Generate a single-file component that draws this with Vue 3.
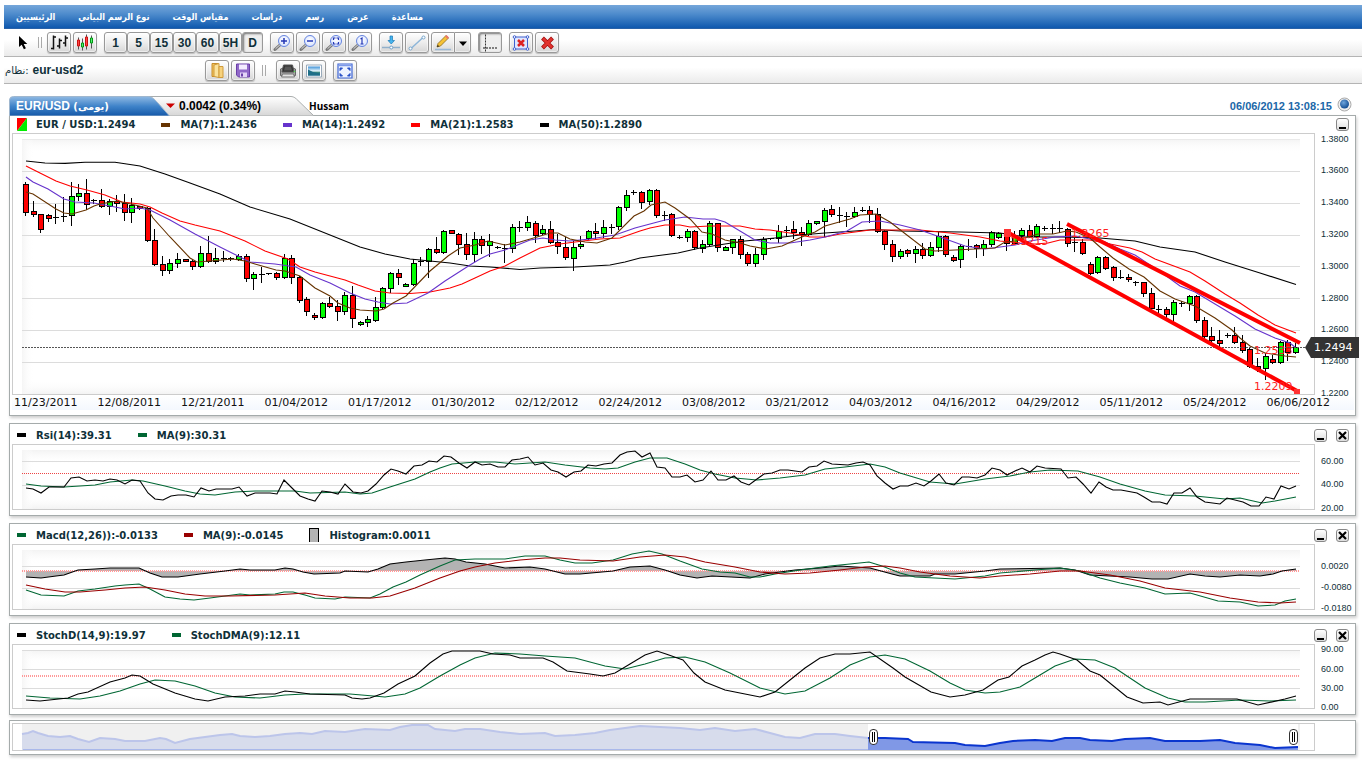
<script setup>
const menu = ['الرئيسيين', 'نوع الرسم البياني', 'مقياس الوقت', 'دراسات', 'رسم', 'عرض', 'مساعدة']
const periods = ['1', '5', '15', '30', '60', '5H', 'D']

// Candles: high, body top, body bottom, low, kind (r = down, g = up, k = doji)
const candleData = `182 184 212 215 r|201 211 214 216 r|214 214 229 232 r|214 215 218 221 r|204 217 217 223 k|197 216 216 221 k|182 196 215 225 g|184 193 196 200 g|179 193 204 209 r|199 200 200 203 k|189 200 206 207 r|199 201 206 214 g|195 201 203 211 r|194 203 212 220 r|198 205 212 222 g|206 206 208 209 r|207 208 240 241 r|229 240 264 265 r|256 264 270 275 r|259 263 270 273 g|253 259 263 267 g|259 259 261 261 r|260 261 266 269 r|246 253 266 267 g|236 253 261 262 r|248 258 261 263 g|251 258 258 261 k|257 258 258 260 k|254 256 259 260 g|254 256 278 281 r|272 274 278 289 g|267 274 274 282 k|273 273 273 274 k|272 273 277 279 r|254 258 277 278 g|255 258 277 283 r|276 277 300 302 r|297 299 311 315 r|313 315 317 319 r|302 303 317 318 g|297 303 306 307 r|300 306 311 320 r|292 295 311 314 g|286 295 318 327 r|321 322 324 325 g|316 319 322 326 g|297 307 320 321 g|287 288 307 308 g|272 273 288 292 g|269 273 277 284 r|283 284 286 286 g|259 263 284 285 g|257 261 261 265 k|248 249 261 277 g|237 249 252 253 r|230 231 252 253 g|230 230 233 233 r|233 234 244 254 r|233 244 254 259 r|232 239 254 261 g|236 239 245 253 r|234 241 245 256 g|246 247 247 248 k|244 248 248 262 k|224 227 248 252 g|221 227 227 231 k|216 222 227 230 g|221 223 235 242 r|225 229 233 234 g|221 229 242 243 r|234 242 246 253 r|237 247 257 259 r|241 247 258 270 g|236 244 246 248 g|230 231 238 239 g|223 231 233 238 r|220 227 233 237 g|224 227 227 233 k|206 207 226 229 g|190 195 207 210 g|190 192 192 194 k|191 192 202 208 r|189 190 201 204 g|189 190 215 217 r|211 215 215 220 k|213 214 235 236 r|235 237 237 238 k|229 231 237 241 g|230 231 247 249 r|240 244 248 252 g|221 223 244 245 g|223 223 247 251 r|246 247 250 250 g|239 239 247 253 g|236 239 254 258 r|252 254 263 265 r|248 254 263 266 g|237 239 254 259 g|238 238 238 239 k|225 231 238 242 g|226 230 230 236 k|221 229 232 238 r|227 232 234 245 r|220 223 234 235 g|221 221 223 224 g|208 210 221 236 g|205 209 214 216 r|207 215 215 222 k|212 216 216 226 k|207 212 216 217 g|207 210 210 211 k|206 210 214 222 r|208 214 231 232 r|230 231 244 249 r|240 244 256 261 r|249 251 256 258 g|249 250 253 256 r|246 249 253 262 g|243 249 255 258 r|242 247 255 256 g|232 236 247 251 g|235 236 254 256 r|255 257 260 261 r|244 246 259 267 g|239 246 246 250 k|244 245 248 257 r|240 244 248 255 g|231 232 244 246 g|232 233 237 238 g|230 233 243 250 r|231 237 243 244 g|228 230 235 240 g|225 230 236 237 r|224 226 236 237 g|226 228 228 230 k|224 228 228 233 k|221 228 228 232 k|228 229 243 246 r|238 242 242 251 k|239 242 253 254 r|262 264 273 274 r|256 257 272 273 g|256 257 268 269 r|266 267 277 280 r|270 277 277 278 k|274 277 279 281 r|281 282 282 285 k|282 282 293 296 r|288 293 308 310 r|305 309 309 314 k|307 309 314 318 r|300 302 314 323 g|301 303 303 306 k|295 296 303 310 g|295 296 320 322 r|317 320 336 339 r|327 336 340 343 r|330 340 343 347 r|333 335 335 337 k|327 335 342 343 r|335 342 350 352 r|348 349 366 367 r|358 366 368 371 r|353 356 368 379 g|355 359 362 363 r|341 342 362 363 g|340 342 352 360 r|343 347 352 353 g`
const candles = candleData.split('|').map((row, i) => {
  const [high, top, bottom, low, kind] = row.split(' ')
  return { x: Math.round(26 + i * 7.605), high: +high, top: +top, bottom: +bottom, low: +low, kind }
})

const ma50 = '26,161 45,163 65,163.4 85,162.3 115,162.3 140,166 165,174 190,183 220,194 250,207 290,219 320,231 340,239 360,247 385,254 410,259 450,263 470,266 490,267 520,269.5 540,268 575,267 610,265 625,262 640,258 655,256 678,253 700,248 725,244 745,241 775,238 800,235 825,233 855,231 875,229.5 900,231 960,232 1000,233 1025,237 1062,237 1100,238 1135,241 1160,247 1195,252 1225,262 1260,273 1296,284.5'
const ma21 = '26,166 40,173 56,181 70,186 87,190 105,195 122,202 140,204 150,207 162,213 180,221 195,225 220,231 245,241 265,251 288,259 300,267 315,272 345,280 358,285 375,291 390,293 410,293.5 430,292 450,288 462,284 475,278 490,271 505,266 520,258 540,248 560,244 575,242 600,239 620,238 640,231 650,228 665,225 680,225 690,227 710,226 740,226 755,229 770,230 790,233 810,237 825,237 840,234 870,230 920,230 950,233 980,237 1000,241 1020,243 1035,244 1048,243 1060,240 1090,240 1105,243 1130,248 1142,252 1155,259 1190,272 1205,281 1225,294 1240,303 1258,315 1275,325 1296,333'
const ma14 = '26,177 33,182 48,189 64,199 75,202 94,203 110,206 125,209 140,208 150,210 170,220 195,234 220,247 250,262 275,264 296,267 310,275 330,283 350,293 365,299 378,302 390,304 407,303 428,293 445,281 470,265 480,259 490,254 505,250 520,244 530,240 543,238 555,240 570,241 590,239 615,235 635,228 650,224 665,220 685,217 703,219 715,219 725,222 740,231 755,240 770,243 790,243 810,240 825,237 847,231 862,222 880,221 900,225 920,230 940,237 965,246 985,249 1000,247 1015,245 1030,241 1055,237 1075,236 1090,239 1105,242 1120,249 1135,255 1150,265 1165,275 1180,286 1195,292 1215,304 1235,316 1255,329 1275,338 1290,343 1296,348'
const ma7 = '26,192 33,194 56,209 64,213 72,214 86,210 94,206 100,204 117,201 135,205 147,208 153,218 170,237 190,258 197,262 210,261 233,259 245,261 255,264 276,270 285,271 300,276 315,288 330,296 338,303 350,308 360,310 376,311 384,309 393,303 406,296 430,271 448,256 460,248 475,245 488,241 505,245 520,242 537,237 550,233 558,233 570,239 585,242 597,243 612,238 634,216 644,211 651,205 665,202 675,208 690,219 702,232 712,234 725,240 740,243 750,246 766,249 782,246 804,236 815,232 825,226 850,219 860,215 876,214 890,222 925,249 935,251 955,250 975,249 995,248 1005,242 1016,241 1024,238 1038,234 1053,234 1067,231 1076,232 1090,238 1100,247 1113,258 1129,269 1144,277 1160,291 1175,299 1195,306 1215,318 1232,330 1240,338 1250,346 1265,353 1285,356 1296,357'

const rsi = '26,488 33,489 41,493 49,487 64,487 71,478 79,477 87,481 95,480 103,481 110,479 117,480 125,484 132,480 140,481 148,493 155,499 163,500 171,496 178,495 186,495 194,497 201,488 209,491 216,489 232,489 239,487 247,496 255,493 270,493 277,494 284,480 292,488 300,496 308,499 315,501 322,491 330,492 338,494 345,484 353,492 361,493 368,491 376,484 384,475 391,469 398,471 406,474 414,466 422,465 429,461 437,462 444,456 451,457 459,463 467,468 475,462 482,465 490,464 498,467 505,467 512,460 520,459 528,457 535,465 543,463 551,470 558,472 566,477 574,472 581,471 588,465 596,466 604,464 612,463 620,455 627,452 635,451 642,457 650,453 657,467 665,468 672,477 680,477 687,475 695,482 703,480 711,471 718,480 726,480 734,476 741,482 749,485 757,479 764,474 772,473 780,470 788,470 802,472 809,467 817,466 824,461 832,464 848,465 856,463 863,462 870,465 877,476 885,483 893,489 900,486 908,486 916,483 924,486 931,481 939,474 946,483 954,485 962,477 969,477 977,478 985,475 992,468 1000,470 1007,475 1015,471 1022,468 1030,472 1037,466 1045,468 1061,469 1068,478 1076,477 1083,484 1091,493 1099,482 1106,487 1113,490 1121,490 1137,493 1144,497 1152,502 1160,502 1167,504 1174,493 1182,493 1190,488 1197,497 1205,502 1220,504 1227,498 1243,502 1251,506 1259,506 1266,497 1274,499 1281,486 1289,489 1296,486'
const rsiMa = '26,484 41,486 64,487 80,486 95,485 110,482 132,480 143,481 165,486 185,491 200,494 215,495 235,492 255,491 295,491 310,493 345,492 360,494 372,493 390,487 415,479 430,472 440,468 452,464 475,462 495,462 515,464 545,462 565,465 590,468 605,469 618,468 635,462 650,458 667,458 685,464 700,470 715,474 735,478 757,480 780,478 805,475 825,469 845,467 870,464 885,467 900,473 930,482 955,484 985,479 1010,476 1030,472 1050,470 1078,471 1100,477 1120,484 1145,491 1165,495 1195,496 1225,499 1240,498 1262,503 1275,501 1296,497'

const macd = '26,590 41,595 64,596 78,591 95,589 115,586 125,585 139,584 150,589 165,597 180,599 194,600 210,598 225,596 240,594 250,595 275,594 284,592 293,592 305,595 315,598 335,599 345,597 370,598 380,594 393,587 406,582 420,575 440,566 455,560 475,559 505,559 525,556 545,556 560,560 575,563 592,563 613,560 632,554 649,551 662,554 680,561 702,569 720,572 735,573 750,577 760,577 775,574 800,570 830,566 850,564 869,562 882,566 900,573 915,577 955,579 985,576 1000,573 1035,570 1060,568 1080,571 1100,578 1120,583 1145,588 1165,594 1190,593 1218,601 1240,602 1258,606 1275,605 1285,601 1296,599'
const macdMa = '26,585 45,589 65,592 80,592 105,590 125,588 145,587 165,590 185,594 205,596 230,596 275,595 305,593 325,596 350,598 372,598 390,596 415,588 440,578 460,571 475,567 495,563 520,560 545,558 560,558 580,560 613,561 640,557 665,555 685,557 705,562 735,567 760,572 785,574 810,573 840,570 865,567 885,566 900,568 920,572 950,576 980,578 1000,576 1030,574 1060,571 1080,571 1110,575 1140,581 1165,588 1200,592 1230,598 1258,602 1280,603 1296,602'
const histogram = '26,577 41,578 56,576 64,575 78,570 95,569 110,568 139,568 150,573 162,577 178,577 200,574 225,571 240,569 250,570 275,570 285,568 293,569 303,572 314,574 340,573 345,571 368,572 378,569 390,564 406,562 425,560 445,558 455,559 466,562 485,564 505,568 530,567 545,569 565,574 580,574 613,571 630,567 650,566 665,570 680,575 697,578 712,576 750,578 765,574 780,572 795,570 820,568 840,566 870,568 892,574 900,576 930,576 935,574 955,574 985,571 1000,569 1060,568 1075,570 1090,575 1130,577 1152,579 1168,579 1190,574 1205,576 1220,577 1240,575 1260,576 1273,574 1282,571 1296,569'

const stoch = '26,700 40,701 68,698 78,694 88,692 110,682 125,678 132,675 140,676 153,684 175,693 195,699 208,701 225,697 245,696 260,694 275,694 285,691 295,692 310,694 345,695 352,698 362,699 370,698 384,693 398,684 415,676 430,663 443,654 452,651 480,651 493,654 510,655 520,658 543,658 553,662 567,671 590,674 603,676 615,673 630,664 645,655 657,651 666,654 683,660 694,673 705,682 725,690 745,694 760,697 775,692 790,680 805,668 820,658 835,654 850,654 870,652 893,668 905,677 931,692 950,697 965,695 983,690 998,680 1009,677 1022,666 1035,660 1045,655 1053,652 1060,654 1077,660 1090,671 1100,675 1127,697 1143,703 1160,702 1168,705 1190,699 1237,699 1258,705 1285,699 1296,696'
const stochMa = '26,696 50,698 80,699 100,696 120,691 140,684 155,680 175,681 195,686 215,693 235,697 260,698 285,695 305,694 350,694 385,697 405,694 420,688 440,676 460,665 475,658 495,653 520,654 545,656 575,658 605,666 625,669 645,664 665,658 685,657 705,662 730,673 760,688 785,694 805,691 830,678 850,665 870,657 885,655 905,659 930,671 950,683 965,690 985,693 1000,692 1020,687 1040,675 1055,666 1075,659 1095,660 1115,668 1145,688 1168,698 1185,702 1205,702 1240,700 1270,701 1296,700'

const navPast = '22,734 28,733 33,731 38,733 48,736 60,737 70,736 78,739 89,742 100,738 115,739 125,741 145,741 160,738 166,739 175,743 190,739 205,737 220,735 232,734 240,736 255,737 270,736 285,734 300,733 312,734 325,731 345,732 365,729 390,730 400,727 412,725 428,725 435,729 455,731 465,729 480,729 500,732 520,734 545,733 555,736 575,735 595,733 610,730 625,728 640,726 660,727 680,728 700,730 715,728 735,731 755,729 770,733 785,737 800,738 815,734 835,734 850,736 868,738'
const navNow = '868,738 885,738 908,739 913,742 955,743 965,745 985,746 1000,743 1013,741 1035,740 1052,741 1065,738 1080,738 1090,740 1112,741 1125,739 1150,738 1165,741 1200,741 1220,740 1235,743 1260,745 1275,748 1298,747'

const dates = ['11/23/2011', '12/08/2011', '12/21/2011', '01/04/2012', '01/17/2012', '01/30/2012', '02/12/2012', '02/24/2012', '03/08/2012', '03/21/2012', '04/03/2012', '04/16/2012', '04/29/2012', '05/11/2012', '05/24/2012', '06/06/2012']

const priceLegend = [
  { text: 'EUR / USD:1.2494', color: 'pair' },
  { text: 'MA(7):1.2436', color: '#663300' },
  { text: 'MA(14):1.2492', color: '#6633cc' },
  { text: 'MA(21):1.2583', color: '#ff0000' },
  { text: 'MA(50):1.2890', color: '#000000' },
]
const priceTicks = [['1.3800', 139], ['1.3600', 170], ['1.3400', 202], ['1.3200', 234], ['1.3000', 266], ['1.2800', 298], ['1.2600', 329], ['1.2400', 361], ['1.2200', 393]]
const trendLabels = [['1.3215', 1010, 242], ['1.3265', 1071, 234], ['1.2533', 1254, 351], ['1.2209', 1254, 387]]

const studies = [
  {
    name: 'RSI', top: 445, height: 64, plotTop: 450, grid: [461, 485], mid: 473, thick: false,
    legend: [{ text: 'Rsi(14):39.31', color: '#000000' }, { text: 'MA(9):30.31', color: '#006633' }],
    ticks: [['60.00', 461], ['40.00', 484], ['20.00', 508]],
    lines: [[rsiMa, '#006633'], [rsi, '#000000']],
  },
  {
    name: 'MACD', top: 545, height: 64, plotTop: 550, grid: [566, 588], mid: 570, thick: true,
    legend: [{ text: 'Macd(12,26)):-0.0133', color: '#006633' }, { text: 'MA(9):-0.0145', color: '#990000' }, { text: 'Histogram:0.0011', color: 'bar' }],
    ticks: [['0.0020', 566], ['-0.0080', 587], ['-0.0180', 608]],
    area: `26,571 ${histogram} 1296,571`,
    lines: [[histogram, '#000000'], [macd, '#006633'], [macdMa, '#990000']],
  },
  {
    name: 'Stochastic', top: 645, height: 63, plotTop: 650, grid: [650, 669, 688], mid: 675, thick: true,
    legend: [{ text: 'StochD(14,9):19.97', color: '#000000' }, { text: 'StochDMA(9):12.11', color: '#006633' }],
    ticks: [['90.00', 649], ['60.00', 669], ['30.00', 688], ['0.00', 707]],
    lines: [[stochMa, '#006633'], [stoch, '#000000']],
  },
]
const pct = (x) => ((x - 13) / 1301) * 100 + '%'
</script>

<template>
  <div class="page">
    <svg class="defs" width="0" height="0" aria-hidden="true">
      <defs>
        <linearGradient id="fadeDown" x1="0" y1="0" x2="0" y2="1"><stop offset="0" stop-color="#f3f3f3" /><stop offset="1" stop-color="#fff" stop-opacity="0" /></linearGradient>
        <linearGradient id="fadeUp" x1="0" y1="1" x2="0" y2="0"><stop offset="0" stop-color="#f3f3f3" /><stop offset="1" stop-color="#fff" stop-opacity="0" /></linearGradient>
        <linearGradient id="fadeRight" x1="0" y1="0" x2="1" y2="0"><stop offset="0" stop-color="#f5f5f5" /><stop offset="1" stop-color="#fff" stop-opacity="0" /></linearGradient>
        <linearGradient id="tabBlue" x1="0" y1="0" x2="0" y2="1"><stop offset="0" stop-color="#8fb9e3" /><stop offset="0.5" stop-color="#3f83c9" /><stop offset="1" stop-color="#1458a8" /></linearGradient>
        <linearGradient id="tabGrey" x1="0" y1="0" x2="0" y2="1"><stop offset="0" stop-color="#fff" /><stop offset="1" stop-color="#d6d6d6" /></linearGradient>
        <radialGradient id="lens" cx="0.5" cy="0.4" r="0.7"><stop offset="0" stop-color="#fff" /><stop offset="1" stop-color="#cfdcff" /></radialGradient>
        <radialGradient id="orb" cx="0.4" cy="0.35" r="0.7"><stop offset="0" stop-color="#6da4dc" /><stop offset="1" stop-color="#0d478e" /></radialGradient>
        <linearGradient id="sky" x1="0" y1="0" x2="0" y2="1"><stop offset="0" stop-color="#3d90d6" /><stop offset="0.5" stop-color="#e9f7fc" /><stop offset="0.65" stop-color="#3c8a82" /><stop offset="1" stop-color="#176b9a" /></linearGradient>
      </defs>
    </svg>

    <nav class="menu">
      <a v-for="m in menu" :key="m" href="#" dir="rtl">{{ m }}</a>
    </nav>

    <div class="toolbar">
      <button class="flat" aria-label="Pointer"><svg width="14" height="16" viewBox="0 0 14 16"><path d="M2 1v11l2.700-2.300 2.200 4.600 2-1-2.200-4.400h3.600z" fill="#000" /></svg></button>
      <span class="sep"></span>
      <div class="group">
        <button class="btn" aria-label="Bars"><svg viewBox="0 0 22 18"><path d="M5.500 2v14M3 15h3M6 3.500h2M11.500 5v10M9 12.500h3M12 7h2M17.500 2v11M15 9.500h3M18 4.500h2" fill="none" stroke="#111" stroke-width="1.500" /></svg></button>
        <button class="btn" aria-label="Candles"><svg viewBox="0 0 22 18"><path d="M4.500 4v12M8.500 5v12M12.500 1v15M17.500 2v13" stroke="#555" /><path d="M3.500 6.500h2v6h-2zM11.500 3.500h2v9h-2z" fill="#f44" stroke="#c11" /><path d="M7.500 9.500h2v4h-2zM16.500 4.500h2v5h-2z" fill="#5e7" stroke="#091" /></svg></button>
      </div>
      <div class="group tight">
        <button v-for="p in periods" :key="p" class="btn period" :class="{ pressed: p === 'D' }">{{ p }}</button>
      </div>
      <div class="group">
        <button v-for="z in ['in', 'out', 'fit', 'one']" :key="z" class="btn" :aria-label="'Zoom ' + z">
          <svg viewBox="0 0 22 18"><path d="M4 16l6-5.500" stroke="#777" stroke-width="3" stroke-linecap="round" /><path d="M4.500 15.300l5.500-5" stroke="#ddd" stroke-width="1" /><circle cx="13" cy="7.500" r="5.500" fill="url(#lens)" stroke="#6685e0" stroke-width="1" />
            <path v-if="z === 'in'" d="M10 7.500h6M13 4.500v6" stroke="#2437b5" stroke-width="1.500" />
            <path v-if="z === 'out'" d="M10 7.500h6" stroke="#2437b5" stroke-width="1.500" />
            <path v-if="z === 'fit'" d="M10.500 6.500v-2h2M13.500 4.500h2v2M15.500 8.500v2h-2M12.500 10.500h-2v-2" fill="none" stroke="#2437b5" stroke-width="1.200" />
            <path v-if="z === 'one'" d="M11.500 5.500l1.500-1v6M11.500 10.500h3" fill="none" stroke="#2437b5" stroke-width="1.200" />
          </svg>
        </button>
      </div>
      <div class="group">
        <button class="btn" aria-label="Insert"><svg viewBox="0 0 22 18"><path d="M2 14h18" stroke="#92b0cb" stroke-width="1.500" /><path d="M10 2.500h2.500v4.500h2l-3.250 3.500L8 7h2z" fill="#45b4ee" stroke="#187ab8" stroke-width="0.700" /><circle cx="11.250" cy="14" r="1.500" fill="#fff" stroke="#6c9fc8" /></svg></button>
        <button class="btn" aria-label="Trend line"><svg viewBox="0 0 22 18"><path d="M5 15L17 4" stroke="#8cb5d8" stroke-width="1.500" /><circle cx="4.500" cy="15" r="1.500" fill="#fff" stroke="#78a6cc" /><circle cx="17.500" cy="4" r="1.500" fill="#fff" stroke="#78a6cc" /></svg></button>
        <span class="split">
          <button class="btn" aria-label="Pencil"><svg viewBox="0 0 22 18"><path d="M3 16h16" stroke="#9bb8d6" stroke-width="1.500" /><path d="M5 13.500l1-3.500 8-8 2.500 2.500-8 8z" fill="#f6c235" stroke="#8c6a1c" stroke-width="0.800" /><path d="M13 3l1.500-1.500L17 4l-1.500 1.500z" fill="#e9776c" /><path d="M5 13.500l.8-2 1.500 1.300z" fill="#222" /></svg></button>
          <button class="btn arrow" aria-label="Pencil options"><svg viewBox="0 0 14 18"><path d="M3 8h8l-4 4.500z" fill="#000" /></svg></button>
        </span>
      </div>
      <button class="btn pressed" aria-label="Crosshair"><svg viewBox="0 0 22 18"><path d="M6.500 1v17" stroke="#333" stroke-dasharray="2 1" /><path d="M4 14.500h15" stroke="#111" stroke-dasharray="2 1" /></svg></button>
      <div class="group">
        <button class="btn" aria-label="Delete object"><svg viewBox="0 0 22 18"><path d="M4.500 3.500h13v12h-13z" fill="#dfe6ff" stroke="#3e5fd0" /><path d="M8 6.500l6 6M14 6.500l-6 6" stroke="#d22" stroke-width="2.500" /><g fill="#fff" stroke="#3e5fd0"><circle cx="4.500" cy="3.500" r="1.300" /><circle cx="17.500" cy="3.500" r="1.300" /><circle cx="4.500" cy="15.500" r="1.300" /><circle cx="17.500" cy="15.500" r="1.300" /></g></svg></button>
        <button class="btn" aria-label="Delete all"><svg viewBox="0 0 22 18"><path d="M6.500 4.500l10 10M16.500 4.500l-10 10" stroke="#a40f0f" stroke-width="4" /><path d="M7 5l9 9M16 5l-9 9" stroke="#e2332e" stroke-width="2.500" /></svg></button>
      </div>
    </div>

    <div class="toolbar second">
      <div class="system"><span dir="ltr">نظام:</span><b>eur-usd2</b></div>
      <div class="group">
        <button class="btn" aria-label="Open"><svg viewBox="0 0 22 18"><path d="M6 2h6v13H6z" fill="#f0c15b" stroke="#c58d2c" /><path d="M8 3.500l5-1.500v14l-5-1z" fill="#fbe39c" stroke="#d09b3b" /><path d="M13 5h4v11h-4z" fill="#f7d27c" stroke="#d09b3b" /></svg></button>
        <button class="btn" aria-label="Save"><svg viewBox="0 0 22 18"><path d="M4.500 2.500h13v13h-11l-2-2z" fill="#9068c8" stroke="#6a3fa8" /><path d="M7 3h8v5H7z" fill="#f4ecff" /><path d="M8 11h7v4.500H8z" fill="#e3d4f7" /><path d="M9 12h2v3H9z" fill="#6a3fa8" /></svg></button>
      </div>
      <span class="sep"></span>
      <div class="group">
        <button class="btn" aria-label="Print"><svg viewBox="0 0 22 18"><path d="M3.500 7.500l3-1h9l3 1v6.500h-15z" fill="#a5a5a5" stroke="#666" /><path d="M6.500 3.500h9l1.500 7H5z" fill="#333" stroke="#555" /><path d="M8 5h6l1 4H7z" fill="#555" /><path d="M5.500 12.500h11l1 3h-13z" fill="#e4e4e4" stroke="#777" /><circle cx="17.500" cy="10" r="0.800" fill="#5d5" /></svg></button>
        <button class="btn" aria-label="Save image"><svg viewBox="0 0 22 18"><path d="M3.500 3.500h15v12h-15z" fill="#fff" stroke="#9ab" /><path d="M5 5h12v9H5z" fill="url(#sky)" /><path d="M5 8l5 2.500 7 1.500v2H5z" fill="#1f6f88" /></svg></button>
      </div>
      <button class="btn" aria-label="Full screen"><svg viewBox="0 0 22 18"><path d="M4 2.500h14v14H4z" fill="#eef3ff" stroke="#3e66d6" stroke-width="1.200" /><path d="M4 4h14" stroke="#7d9aea" stroke-width="1.500" /><path d="M6 9V6.500h2.500zM13.500 6.500H16V9zM16 12v2.500h-2.500zM8.500 14.500H6V12z" fill="#2950c8" stroke="#2950c8" /></svg></button>
    </div>

    <main>
      <header class="tabs">
        <svg class="tabShape" width="310" height="20" viewBox="0 0 310 20" aria-hidden="true">
          <path d="M130 0.500h152c3 0 5 2 7 4l16 15.500H130z" fill="url(#tabGrey)" stroke="#a9adad" />
          <path d="M0.500 20V4q0-3.500 4-3.500h134c5 0 7 3 10 6l12 13.500z" fill="url(#tabBlue)" stroke="#9fb7cf" />
        </svg>
        <h1>EUR/USD <span dir="rtl">(يومى)</span></h1>
        <p class="change"><svg width="9" height="6" viewBox="0 0 9 6"><path d="M0 0.500h9L4.500 5z" fill="#c00" /></svg>0.0042 (0.34%)</p>
        <p class="user">Hussam</p>
        <time>06/06/2012 13:08:15</time>
        <svg class="orb" width="15" height="15" viewBox="0 0 15 15"><circle cx="7.500" cy="7.500" r="6.500" fill="#eee" stroke="#aaa" /><circle cx="7.500" cy="7" r="4.500" fill="url(#orb)" /></svg>
      </header>

      <section class="panel first">
        <div class="head">
          <ul class="legend">
            <li v-for="l in priceLegend" :key="l.text">
              <svg v-if="l.color === 'pair'" width="10" height="13" viewBox="0 0 10 13"><path d="M0 0h10L0 13z" fill="#f00" /><path d="M10 0v13H0z" fill="#0e0" /></svg>
              <i v-else :style="{ background: l.color }"></i>{{ l.text }}
            </li>
          </ul>
          <button class="win" aria-label="Minimise"><svg viewBox="0 0 11 11"><path d="M2 8h7v2H2z" fill="#000" /></svg></button>
        </div>
        <div class="row">
          <div class="plot">
            <svg height="260" viewBox="13 134 1301 260" preserveAspectRatio="none">
              <rect x="22" y="139" width="1278" height="14" fill="url(#fadeDown)" />
              <rect x="22" y="380" width="1278" height="14" fill="url(#fadeUp)" />
              <rect x="22" y="139" width="12" height="255" fill="url(#fadeRight)" />
              <path d="M22 171.500h1278M22 203.500h1278M22 235.500h1278M22 266.500h1278M22 298.500h1278M22 330.500h1278M22 362.500h1278" stroke="#dcdcdc" />
              <path d="M22 139.500h1278" stroke="#eaeaea" />
              <g shape-rendering="crispEdges">
                <g v-for="(c, i) in candles" :key="i">
                  <path :d="`M${c.x - 0.5} ${c.high}V${c.low + 1}`" stroke="#000" />
                  <rect v-if="c.kind === 'k'" :x="c.x - 3" :y="c.top" width="6" height="1" fill="#000" />
                  <rect v-else :x="c.x - 2.5" :y="c.top + 0.5" width="5" :height="c.bottom - c.top" :fill="c.kind === 'g' ? '#00ff00' : '#ff0000'" stroke="#000" />
                </g>
              </g>
              <g fill="none" stroke-width="1.100">
                <polyline :points="ma50" stroke="#000" />
                <polyline :points="ma21" stroke="#f00" />
                <polyline :points="ma14" stroke="#6633cc" />
                <polyline :points="ma7" stroke="#663300" />
              </g>
              <path d="M22 347.500h1292" stroke="#555" stroke-dasharray="2 1" />
              <path d="M1007 232L1299 392M1067 224L1300 343" stroke="#f00" stroke-width="4" />
              <path d="M1004 229h7v8h-7zM1294 389h6v5h-6z" fill="#f33" />
            </svg>
            <span v-for="t in trendLabels" :key="t[0]" class="trend" :style="{ left: pct(t[1]), top: t[2] - 134 + 'px' }">{{ t[0] }}</span>
          </div>
          <div class="axis">
            <span v-for="t in priceTicks" :key="t[0]" :style="{ top: t[1] - 133 + 'px' }">{{ t[0] }}</span>
            <output class="tag">1.2494</output>
          </div>
        </div>
        <ol class="dates"><li v-for="d in dates" :key="d">{{ d }}</li></ol>
      </section>

      <section v-for="s in studies" :key="s.name" class="panel">
        <div class="head">
          <ul class="legend">
            <li v-for="l in s.legend" :key="l.text"><i v-if="l.color !== 'bar'" :style="{ background: l.color }"></i><i v-else class="bar"></i>{{ l.text }}</li>
          </ul>
          <button class="win" aria-label="Minimise"><svg viewBox="0 0 11 11"><path d="M2 8h7v2H2z" fill="#000" /></svg></button>
          <button class="win" aria-label="Close"><svg viewBox="0 0 11 11"><path d="M2 2l7 7M9 2l-7 7" stroke="#000" stroke-width="2.200" /></svg></button>
        </div>
        <div class="row">
          <div class="plot">
            <svg :height="s.height" :viewBox="`13 ${s.top} 1301 ${s.height}`" preserveAspectRatio="none">
              <rect x="22" :y="s.plotTop" width="1278" height="14" fill="url(#fadeDown)" />
              <rect x="22" :y="s.top + s.height - 14" width="1278" height="14" fill="url(#fadeUp)" />
              <rect x="22" :y="s.plotTop" width="12" :height="s.height - 5" fill="url(#fadeRight)" />
              <path v-for="g in s.grid" :key="g" :d="`M22 ${g + 0.5}h1278`" stroke="#dcdcdc" />
              <polygon v-if="s.area" :points="s.area" fill="#b3b3b3" />
              <path v-if="s.thick" :d="`M22 ${s.mid + 1}h1277`" stroke="#f99" stroke-width="2" stroke-dasharray="1 1" />
              <path v-else :d="`M22 ${s.mid + 0.5}h1277`" stroke="#e44" stroke-dasharray="1 1" />
              <polyline v-for="l in s.lines" :key="l[1]" :points="l[0]" :stroke="l[1]" fill="none" stroke-width="1.100" />
            </svg>
          </div>
          <div class="axis"><span v-for="t in s.ticks" :key="t[0]" :style="{ top: t[1] - s.top + 1 + 'px' }">{{ t[0] }}</span></div>
        </div>
      </section>

      <section class="panel navigator">
        <div class="row">
          <div class="plot">
            <svg height="26" viewBox="13 724 1301 26" preserveAspectRatio="none">
              <path d="M22 724h846v26H22z" fill="#f0f0f0" />
              <path d="M1298 724h2v26h-2z" fill="#f0f0f0" />
              <polygon :points="`22,750 ${navPast} 868,750`" fill="#d7dcec" />
              <polyline :points="navPast" fill="none" stroke="#bcc5ea" stroke-width="2" />
              <path d="M23 749.500h845" stroke="#a9b8ea" />
              <polygon :points="`868,750 ${navNow} 1298,750`" fill="#8098e6" />
              <polyline :points="navNow" fill="none" stroke="#0a35cf" stroke-width="2" />
            </svg>
            <button class="handle" aria-label="Range start" :style="{ left: pct(869) }"></button>
            <button class="handle" aria-label="Range end" :style="{ left: pct(1289) }"></button>
          </div>
          <div class="axis"></div>
        </div>
      </section>
    </main>
  </div>
</template>

<style>
body { background: #fff; }
</style>

<style scoped>
* { box-sizing: border-box; }
.page { padding: 5px 4px; font-family: "Liberation Sans", "DejaVu Sans", sans-serif; color: #0f3039; }
.defs { position: absolute; }
ul, ol, p, h1 { margin: 0; padding: 0; list-style: none; }
.menu { display: flex; align-items: center; gap: 23px; height: 24px; padding: 0 12px; background: linear-gradient(#75a6da, #4d8bcc 40%, #0f58ae); border-bottom: 1px solid #2a62a8; }
.menu a { color: #fff; font: bold 9px/20px "DejaVu Sans Condensed", "DejaVu Sans", sans-serif; text-decoration: none; }
.toolbar { display: flex; align-items: center; gap: 7px; height: 28px; padding-left: 13px; border-bottom: 1px solid #b4b4b4; background: linear-gradient(#fff, #fff 40%, #ebebeb); }
.toolbar.second { height: 27px; padding-left: 1px; }
.group { display: flex; gap: 2px; }
.group.tight { gap: 0; }
button { padding: 0; margin: 0; font: inherit; color: inherit; }
.flat { width: 14px; height: 16px; border: 0; background: none; line-height: 0; }
.sep { width: 4px; height: 11px; margin-right: -2px; border: 1px solid #aaa; border-width: 0 1px; }
.second .sep { margin-right: 3px; }
.btn { width: 24px; height: 21px; border: 1px solid #999; border-radius: 3px; background: linear-gradient(#fff, #ededed 50%, #d6d6d6); box-shadow: inset 0 0 0 1px #fff8, 0 1px 1px #0003; line-height: 0; }
.btn svg { width: 22px; height: 19px; }
.btn.period { width: 23px; font: bold 12px/18px "Liberation Sans", sans-serif; }
.btn.period:last-child { width: 21px; }
.btn.pressed { background: #eee; box-shadow: inset 1px 1px 2px #777; }
.split { display: flex; }
.split .btn:first-child { border-radius: 3px 0 0 3px; }
.btn.arrow { width: 16px; border-left: 0; border-radius: 0 3px 3px 0; }
.btn.arrow svg { width: 14px; }
.system { display: flex; align-items: center; gap: 4px; width: 193px; font-size: 12px; }
.system span { font: 10px "DejaVu Sans", sans-serif; }
main { margin: 12px 6px 0 5px; }
.tabs { position: relative; display: flex; align-items: center; height: 19px; padding-right: 4px; }
.tabShape { position: absolute; left: 0; top: 0; }
.tabs h1 { position: relative; width: 157px; padding-left: 7px; color: #fff; font-size: 12px; }
.tabs h1 span { font: bold 10px "DejaVu Sans", sans-serif; }
.change { position: relative; display: flex; align-items: center; gap: 4px; width: 143px; font-size: 12px; font-weight: bold; color: #000; }
.user { flex: 1; font: bold 10px "Noto Sans", sans-serif; color: #000; }
time { font-size: 11px; font-weight: bold; color: #2067a8; }
.orb { margin: 0 0 2px 5px; }
.panel { margin-bottom: 7px; padding: 0 1px 5px 2px; border: 1px solid #a5abab; background: #fff; box-shadow: 1px 2px 3px #0003; }
.head { display: flex; align-items: center; height: 20px; padding: 2px 5px 0 5px; }
.first .head { height: 17px; padding-top: 0; }
.legend { display: flex; flex: 1; gap: 26px; font: bold 10px "DejaVu Sans", sans-serif; }
.legend li { display: flex; align-items: center; gap: 10px; height: 13px; white-space: nowrap; }
.legend i { width: 9px; height: 4px; }
.legend i.bar { width: 10px; height: 14px; border: 1px solid #000; border-bottom: 0; background: #b3b3b3; }
.legend svg { margin-right: -1px; }
.win { width: 13px; height: 13px; margin-left: 9px; border: 1px solid #888; border-radius: 3px; background: linear-gradient(#fff, #ddd); line-height: 0; }
.win svg { width: 11px; height: 11px; }
.row { display: flex; }
.plot { position: relative; flex: 1; min-width: 0; border: 1px solid #ccc; line-height: 0; }
.plot > svg { display: block; width: 100%; }
.axis { position: relative; width: 39px; font-size: 9px; }
.axis span { position: absolute; left: 6px; line-height: 10px; margin-top: -5px; }
.trend { position: absolute; margin-top: -6px; color: #f22; font: 11px/12px "DejaVu Sans", sans-serif; }
.tag { position: absolute; right: -5px; top: 204px; width: 54px; padding-left: 9px; color: #fff; background: #333; clip-path: polygon(0 50%, 6px 0, 100% 0, 100% 100%, 6px 100%); font: 11px/21px "DejaVu Sans", sans-serif; }
.dates { display: flex; justify-content: space-between; height: 15px; padding: 0 24px 0 2px; background: linear-gradient(#fff, #f4f8fe); color: #111; font: 11px/16px "DejaVu Sans", sans-serif; }
.panel:nth-last-child(2) { margin-bottom: 5px; }
.navigator { margin-bottom: 0; padding-top: 2px; padding-bottom: 3px; }
.handle { position: absolute; top: 5px; width: 9px; height: 16px; border: 1px solid #333; border-radius: 4px; background: linear-gradient(90deg, #fff 2px, #000 2px 3px, #fff 3px 4px, #000 4px 5px, #fff 5px) center / 7px 10px no-repeat, #fff; }
</style>
